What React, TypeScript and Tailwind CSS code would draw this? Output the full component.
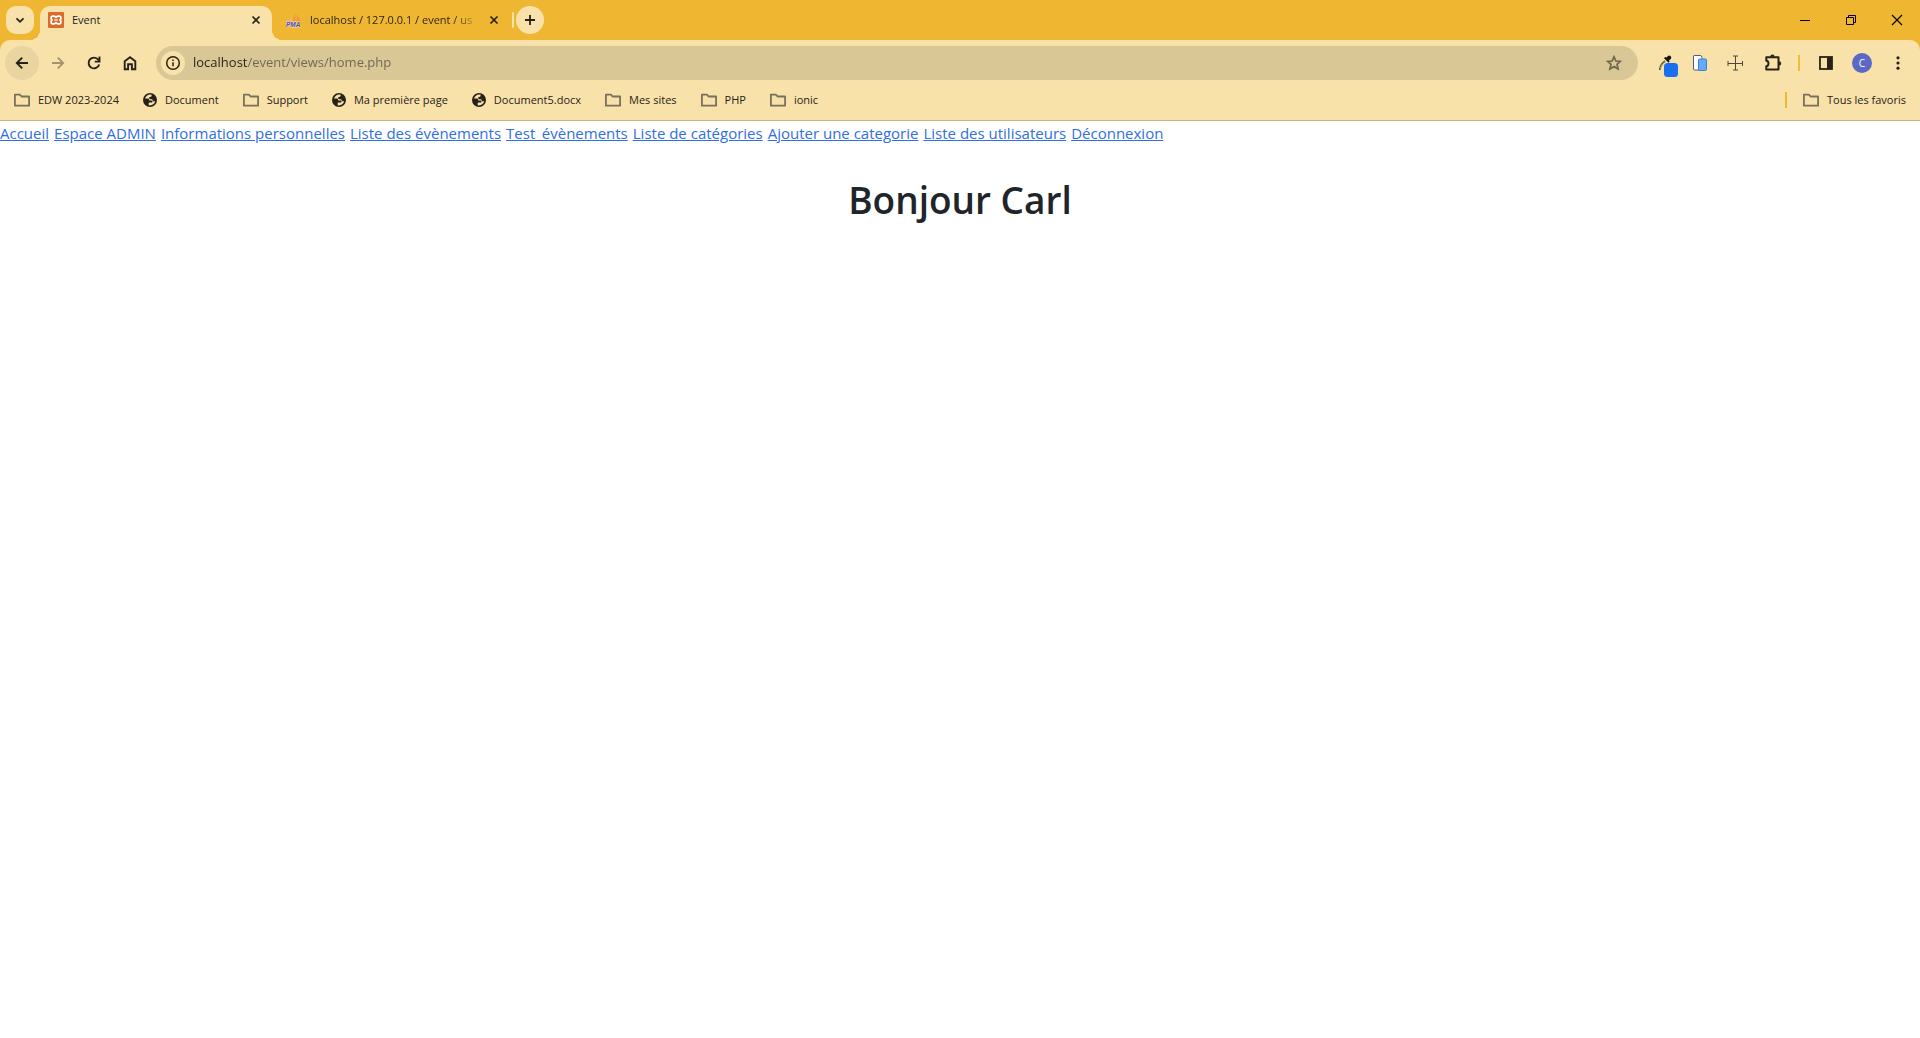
import React from "react";

type Bookmark = { label: string; kind: "folder" | "globe" };

const bookmarks: Bookmark[] = [
  { label: "EDW 2023-2024", kind: "folder" },
  { label: "Document", kind: "globe" },
  { label: "Support", kind: "folder" },
  { label: "Ma première page", kind: "globe" },
  { label: "Document5.docx", kind: "globe" },
  { label: "Mes sites", kind: "folder" },
  { label: "PHP", kind: "folder" },
  { label: "ionic", kind: "folder" },
];

const links = [
  "Accueil",
  "Espace ADMIN",
  "Informations personnelles",
  "Liste des évènements",
  "Test_évènements",
  "Liste de catégories",
  "Ajouter une categorie",
  "Liste des utilisateurs",
  "Déconnexion",
];

function FolderIcon() {
  return (
    <svg className="h-4 w-4 shrink-0" viewBox="0 0 16 16" fill="none" stroke="#77705d" strokeWidth="1.8" strokeLinejoin="round" aria-hidden="true">
      <path d="M.9 2.600h5l1.700 1.900h7.500v9.200H.9z" />
    </svg>
  );
}

function GlobeIcon() {
  return (
    <svg className="h-3.5 w-3.5 shrink-0" viewBox="0 0 14 14" aria-hidden="true">
      <circle cx="7" cy="7" r="7" fill="#26221a" />
      <path
        d="M8.600 1.700C5.500 1 2.800 2.800 2 5.600h2.600c.9 0 1.400.5 1.500 1.200.1.600.6.800 1.200.8h1.200c.6 0 1 .4 1 1s-.4 1-1 1H6.800c-.7 0-1.100.4-1.100 1v1.700c3 .6 5.700-1.200 6.500-4h-1.500c-.7 0-1-.4-1-1s-.5-1.100-1.200-1.100H7.300c-.7 0-1.200-.4-1.200-1.100s.5-1.100 1.200-1.100c.8 0 1.300-.5 1.300-1.200z"
        fill="#f9e2a9"
      />
    </svg>
  );
}

function CloseIcon() {
  return (
    <svg className="h-4 w-4" viewBox="0 0 16 16" stroke="#26221a" strokeWidth="1.700" aria-hidden="true">
      <path d="M4.500 4.500l7 7M11.500 4.500l-7 7" />
    </svg>
  );
}

function TabStrip() {
  return (
    <header className="flex h-10 items-start bg-[#efb631] pt-1.5 pl-1.5">
      <button aria-label="Rechercher dans les onglets" className="flex h-7 w-7 shrink-0 items-center justify-center rounded-[10px] bg-[#f9e2a9]">
        <svg className="h-4 w-4" viewBox="0 0 16 16" fill="none" stroke="#26221a" strokeWidth="1.800" aria-hidden="true">
          <path d="M4.500 6.300L8 9.800l3.500-3.500" />
        </svg>
      </button>
      <div className="relative ml-1.5 flex h-full w-[232px] shrink-0 items-center rounded-t-[10px] bg-[#f9e2a9] pr-2 pb-1.5 pl-2">
        <span className="absolute bottom-0 -left-2.5 h-2.5 w-2.5 bg-[radial-gradient(circle_at_0_0,transparent_10px,#f9e2a9_10px)]" />
        <span className="absolute -right-2.5 bottom-0 h-2.5 w-2.5 bg-[radial-gradient(circle_at_100%_0,transparent_10px,#f9e2a9_10px)]" />
        <svg className="h-4 w-4 shrink-0" viewBox="0 0 16 16" aria-hidden="true">
          <rect width="16" height="16" rx="1" fill="#dc6b2a" />
          <path
            d="M4.200 4.100h2.200L8 5.400l1.600-1.300h2.200l1 1v1.800L12 8l.8 1.100v1.800l-1 1H9.600L8 10.600l-1.600 1.300H4.200l-1-1V9.100L4 8l-.8-1.100V5.100z"
            fill="none"
            stroke="#fff"
            strokeWidth="1.800"
            strokeLinejoin="round"
          />
          <path d="M6.300 8h3.400" stroke="#fff" strokeWidth="1.300" />
        </svg>
        <span className="ml-2 flex-1 text-[11px] text-[#26221a]">Event</span>
        <button aria-label="Fermer Event">
          <CloseIcon />
        </button>
      </div>
      <div className="flex h-7 w-[241px] shrink-0 items-center pr-[11px] pl-3.5">
        <svg className="h-4 w-4 shrink-0" viewBox="0 0 16 16" aria-hidden="true">
          <path d="M6.500 9C7 6 8 3.500 9.500 1.500 9 4 9.500 7 10 9z" fill="#f49b32" />
          <path d="M10.200 9C11 6.500 11 4.500 10.300 2.500c2.200 1.500 3.700 4 4.200 6.500z" fill="#f59a3a" />
          <path d="M1 9c2.500-.5 4-2 5-4-.2 1.500-.2 2.700 0 4z" fill="#d9b9a0" />
          <text x="0" y="14.500" fontSize="6.500" fontWeight="800" fontStyle="italic" fontFamily="Liberation Sans, sans-serif" fill="#5b4a86" stroke="#e9dcd8" strokeWidth="1.200" paintOrder="stroke">
            PMA
          </text>
        </svg>
        <span className="ml-2 flex-1 bg-[linear-gradient(90deg,#26221a_142px,transparent_172px)] bg-clip-text text-[11px] whitespace-nowrap text-transparent">
          localhost / 127.0.0.1 / event / us
        </span>
        <button aria-label="Fermer localhost">
          <CloseIcon />
        </button>
      </div>
      <div className="mt-1.5 -ml-px h-4 w-0.5 shrink-0 rounded bg-[#f9e2a9]" />
      <button aria-label="Nouvel onglet" className="ml-0.5 flex h-7 w-7 shrink-0 items-center justify-center rounded-full bg-[#f9e2a9]">
        <svg className="h-4 w-4" viewBox="0 0 16 16" stroke="#26221a" strokeWidth="1.800" aria-hidden="true">
          <path d="M8 3v10M3 8h10" />
        </svg>
      </button>
      <div className="ml-auto flex h-7 text-black">
        <button aria-label="Réduire" className="flex w-[46px] items-center justify-center">
          <svg className="h-3 w-3" viewBox="0 0 12 12" fill="none" stroke="currentColor" aria-hidden="true">
            <path d="M1 6.500h10" />
          </svg>
        </button>
        <button aria-label="Restaurer" className="flex w-[46px] items-center justify-center">
          <svg className="h-3 w-3" viewBox="0 0 12 12" fill="none" stroke="currentColor" aria-hidden="true">
            <path d="M1.500 3.500h7v7h-7zM3.500 3.500v-2h7v7h-2" />
          </svg>
        </button>
        <button aria-label="Fermer" className="flex w-[46px] items-center justify-center">
          <svg className="h-3 w-3" viewBox="0 0 12 12" fill="none" stroke="currentColor" strokeWidth="1.100" aria-hidden="true">
            <path d="M1 1l10 10M11 1L1 11" />
          </svg>
        </button>
      </div>
    </header>
  );
}

function Toolbar() {
  return (
    <div className="flex h-[46px] items-center pl-[5px]">
      <button aria-label="Retour" className="flex h-[34px] w-[34px] items-center justify-center rounded-full bg-[#ead4a0]">
        <svg className="h-4 w-4" viewBox="0 0 16 16" fill="none" stroke="#26221a" strokeWidth="1.900" aria-hidden="true">
          <path d="M14 8H3M8.200 2.600L2.800 8l5.400 5.400" />
        </svg>
      </button>
      <button aria-label="Avancer" className="ml-0.5 flex h-[34px] w-[34px] items-center justify-center">
        <svg className="h-4 w-4" viewBox="0 0 16 16" fill="none" stroke="#a1936e" strokeWidth="1.800" aria-hidden="true">
          <path d="M2 8h11M7.800 2.600L13.200 8l-5.400 5.400" />
        </svg>
      </button>
      <button aria-label="Actualiser" className="ml-0.5 flex h-[34px] w-[34px] items-center justify-center">
        <svg className="h-4 w-4" viewBox="0 0 16 16" fill="none" stroke="#26221a" strokeWidth="1.900" aria-hidden="true">
          <path d="M13.200 9.500A5.400 5.400 0 1 1 12.300 4.700l1 1.200" />
          <path d="M13.500 1.500v5.100H8.800" />
        </svg>
      </button>
      <button aria-label="Accueil du navigateur" className="ml-0.5 flex h-[34px] w-[34px] items-center justify-center">
        <svg className="h-4 w-4" viewBox="0 0 16 16" fill="none" stroke="#26221a" strokeWidth="1.900" aria-hidden="true">
          <path d="M2.700 6.200L8 2.200l5.300 4v8H9.900V9.300H6.100v4.900H2.700z" />
        </svg>
      </button>
      <div className="ml-[9px] flex h-[34px] min-w-0 flex-1 items-center rounded-full bg-[#d9c795] pr-4 pl-[5px]">
        <button aria-label="Informations sur le site" className="flex h-6 w-6 shrink-0 items-center justify-center rounded-full bg-[#f9e2a9]">
          <svg className="h-4 w-4" viewBox="0 0 16 16" fill="none" stroke="#26221a" strokeWidth="1.500" aria-hidden="true">
            <circle cx="8" cy="8" r="6.300" />
            <path d="M8 7.200v4M8 4.500v1.600" />
          </svg>
        </button>
        <input
          aria-label="Adresse"
          defaultValue="localhost/event/views/home.php"
          spellCheck={false}
          className="ml-2 min-w-0 flex-1 bg-[linear-gradient(90deg,#26221a_55px,#6d6650_55px)] bg-clip-text text-[13px] text-transparent outline-none"
        />
        <button aria-label="Ajouter aux favoris">
          <svg className="h-4 w-4" viewBox="0 0 16 16" fill="none" stroke="#6d6650" strokeWidth="1.700" aria-hidden="true">
            <path d="M8 1.800l1.900 4.200 4.500.4-3.400 3 1.100 4.500L8 11.500l-4.100 2.400L5 9.400l-3.400-3 4.500-.4z" />
          </svg>
        </button>
      </div>
      <div className="ml-5 flex items-center text-[#26221a]">
        <button aria-label="Pipette à couleurs">
          <svg className="h-7 w-5" viewBox="0 0 20 28" aria-hidden="true">
            <path d="M1.800 21c0-3 1.700-6 5.200-9" fill="none" stroke="#4d5a35" strokeWidth="1.800" />
            <path d="M2.500 19.500c.4-2.500 2-4.600 4.300-6.600" fill="none" stroke="#c9d3a6" strokeWidth=".7" />
            <path d="M6 9.200l4.600 4.600 1-1-.6-1.800c2-.5 3-2.500 1.700-3.800s-3.200-.5-3.800 1.300L7.200 8z" fill="#15130e" />
            <rect x="6" y="14" width="14" height="14" rx="3.500" fill="#1a6fee" />
          </svg>
        </button>
        <button aria-label="Vue mobile" className="ml-3.5">
          <svg className="h-4 w-4" viewBox="0 0 16 16" aria-hidden="true">
            <path d="M1.500 1.200q0-.7.700-.7H8q2 0 2 2V15H2.200q-.7 0-.7-.7z" fill="#fff" stroke="#4f5d78" />
            <rect x="6.500" y="4" width="8" height="11.500" rx="1" fill="#67a9f5" stroke="#3d80d8" />
          </svg>
        </button>
        <button aria-label="Règle" className="ml-[19px]">
          <svg className="h-4 w-4" viewBox="0 0 16 16" fill="none" stroke="#4d473a" strokeWidth="1" aria-hidden="true">
            <path d="M8.500 1v14M1 8.500h14M6 1h5M6 15h5M1 6v5M15.500 6v5" />
          </svg>
        </button>
        <button aria-label="Extensions" className="ml-5">
          <svg className="h-5 w-5" viewBox="0 0 20 20" aria-hidden="true">
            <path d="M3.300 4.300h12.200v12.200H3.300v-3.300c2.900-.3 2.900-5.200 0-5.500z" fill="none" stroke="#26221a" strokeWidth="2" strokeLinejoin="round" />
            <path d="M7.200 3.800a2.200 2.200 0 0 1 4.400 0zM16 8.200a2.200 2.200 0 0 1 0 4.400z" fill="#26221a" />
          </svg>
        </button>
        <span className="ml-[15px] h-4 w-0.5 bg-[#e9bf3c]" />
        <button aria-label="Panneau latéral" className="ml-[18px]">
          <svg className="h-4 w-4" viewBox="0 0 16 16" aria-hidden="true">
            <rect x="2" y="2" width="12" height="12" fill="none" stroke="#26221a" strokeWidth="1.800" />
            <path d="M9 2h5v12H9z" fill="#26221a" />
          </svg>
        </button>
        <button aria-label="Profil" className="ml-[18px] flex h-5 w-5 items-center justify-center rounded-full bg-[#5b68c4] text-[10px] text-white">
          C
        </button>
        <button aria-label="Menu" className="mr-3.5 ml-[18px]">
          <svg className="h-4 w-4" viewBox="0 0 16 16" fill="#26221a" aria-hidden="true">
            <circle cx="8" cy="2.800" r="1.600" />
            <circle cx="8" cy="8" r="1.600" />
            <circle cx="8" cy="13.200" r="1.600" />
          </svg>
        </button>
      </div>
    </div>
  );
}

function BookmarksBar() {
  return (
    <div className="flex h-7 items-center gap-6 pr-3.5 pl-3.5 text-[11px] whitespace-nowrap text-[#26221a]">
      {bookmarks.map((b) => (
        <button key={b.label} className="flex items-center gap-2">
          {b.kind === "folder" ? <FolderIcon /> : <GlobeIcon />}
          {b.label}
        </button>
      ))}
      <div className="ml-auto flex items-center gap-4">
        <span className="h-4 w-0.5 bg-[#efb631]" />
        <button className="flex items-center gap-2">
          <FolderIcon />
          Tous les favoris
        </button>
      </div>
    </div>
  );
}

export default function App() {
  return (
    <div className="min-h-screen bg-white font-['Open_Sans','Noto_Sans',sans-serif]">
      <TabStrip />
      <div className="bg-[#efb631]">
        <div className="rounded-t-[10px] border-b border-[#c4b587] bg-[#f9e2a9] pb-1.5">
          <Toolbar />
          <BookmarksBar />
        </div>
      </div>
      <nav className="flex flex-wrap gap-x-[5px] text-[15px] leading-6 text-[#2f6fe0]">
        {links.map((l) => (
          <a key={l} href="#" className="underline">
            {l}
          </a>
        ))}
      </nav>
      <main className="pt-8">
        <h1 className="text-center text-[37px] leading-[46px] font-semibold text-[#212529]">Bonjour Carl</h1>
      </main>
    </div>
  );
}
